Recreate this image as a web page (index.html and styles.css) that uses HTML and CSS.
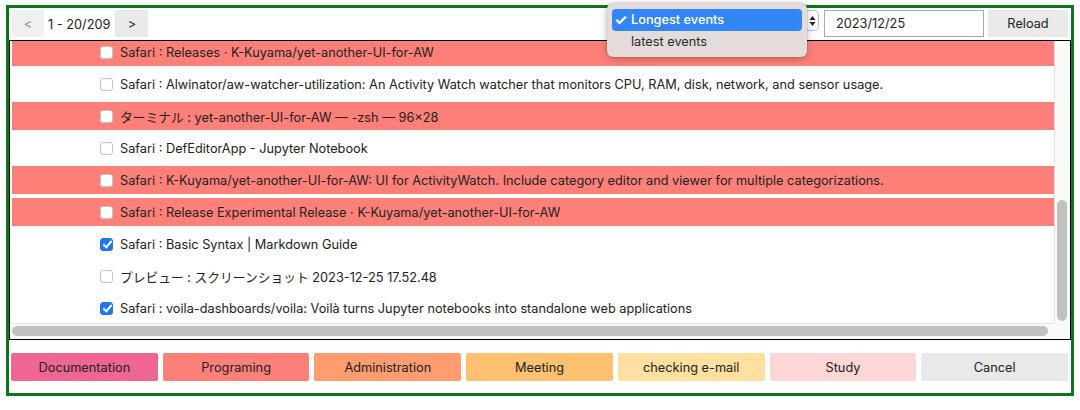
FILE: index.html
```html
<!DOCTYPE html>
<html lang="en">
<head>
<meta charset="utf-8">
<title>Events</title>
<link rel="stylesheet" href="styles.css">
</head>
<body>
<div class="frame">
  <div class="toolbar">
    <div class="pager">
      <button class="btn nav" disabled>&lt;</button>
      <span class="range">1 - 20/209</span>
      <button class="btn nav next">&gt;</button>
    </div>
    <div class="controls">
      <div class="select-wrap">
        <div class="stepper">
          <svg width="7" height="12" viewBox="0 0 7 12"><path d="M3.5 1 L6.5 5 L0.5 5 Z M3.5 11 L6.5 7 L0.5 7 Z" fill="#222"/></svg>
        </div>
        <div class="popup">
          <div class="opt active"><span class="tick">✓</span>Longest events</div>
          <div class="opt">latest events</div>
        </div>
      </div>
      <input class="date" type="text" value="2023/12/25">
      <button class="btn reload">Reload</button>
    </div>
  </div>
  <div class="table-box">
    <div class="viewport">
      <div class="list">
        <div class="row red"><input type="checkbox"><span>Safari : Releases · K-Kuyama/yet-another-UI-for-AW</span></div>
        <div class="row"><input type="checkbox"><span>Safari : Alwinator/aw-watcher-utilization: An Activity Watch watcher that monitors CPU, RAM, disk, network, and sensor usage.</span></div>
        <div class="row red"><input type="checkbox"><span>ターミナル : yet-another-UI-for-AW — -zsh — 96×28</span></div>
        <div class="row"><input type="checkbox"><span>Safari : DefEditorApp - Jupyter Notebook</span></div>
        <div class="row red"><input type="checkbox"><span>Safari : K-Kuyama/yet-another-UI-for-AW: UI for ActivityWatch. Include category editor and viewer for multiple categorizations.</span></div>
        <div class="row red"><input type="checkbox"><span>Safari : Release Experimental Release · K-Kuyama/yet-another-UI-for-AW</span></div>
        <div class="row"><input type="checkbox" checked><span>Safari : Basic Syntax | Markdown Guide</span></div>
        <div class="row"><input type="checkbox"><span>プレビュー : スクリーンショット 2023-12-25 17.52.48</span></div>
        <div class="row"><input type="checkbox" checked><span>Safari : voila-dashboards/voila: Voilà turns Jupyter notebooks into standalone web applications</span></div>
      </div>
    </div>
    <div class="vbar"><div class="vthumb"></div></div>
    <div class="hbar"><div class="hthumb"></div></div>
    <div class="corner"></div>
  </div>
  <div class="categories">
    <button class="cat c-doc">Documentation</button>
    <button class="cat c-prog">Programing</button>
    <button class="cat c-admin">Administration</button>
    <button class="cat c-meet">Meeting</button>
    <button class="cat c-mail">checking e-mail</button>
    <button class="cat c-study">Study</button>
    <button class="cat c-cancel">Cancel</button>
  </div>
</div>
</body>
</html>
```

FILE: styles.css
```css
* { box-sizing: border-box; }
html, body { margin: 0; padding: 0; background: #fff; }
body {
  font-family: Inter, "Noto Sans CJK JP", sans-serif;
  font-size: 12.75px;
  color: #222;
}
.frame {
  margin: 5px 0 0 6px;
  width: 1068px;
  height: 391px;
  border: 3px solid #0b761c;
  display: flex;
  flex-direction: column;
}
.toolbar {
  height: 32px;
  display: flex;
  justify-content: space-between;
  align-items: flex-start;
  padding: 2px 3px 0 3px;
}
.pager { display: flex; align-items: center; height: 27px; }
.btn {
  font-family: inherit;
  font-size: 12.75px;
  color: #222;
  border: none;
  border-radius: 2px;
  background: #e9e9e9;
  height: 27px;
  padding: 0;
  cursor: pointer;
}
.nav { width: 32px; }
.nav[disabled] { background: #f0f0f0; color: #888; }
.next { width: 33px; }
.range { margin: 1px 5px 0 4px; }
.controls { display: flex; align-items: flex-start; }
.select-wrap {
  position: relative;
  width: 212px;
  height: 27px;
  display: flex;
  justify-content: flex-end;
  margin-right: 5px;
}
.stepper {
  width: 13px;
  height: 21px;
  border: 1px solid #9fc2ee;
  border-left: none;
  border-radius: 0 5px 5px 0;
  display: flex;
  align-items: center;
  justify-content: center;
  background: #fff;
}
.popup {
  position: absolute;
  left: 0;
  top: -7px;
  width: 200px;
  height: 54px;
  background: #e4dbdb;
  border-radius: 6px;
  box-shadow: 0 2px 8px rgba(0,0,0,0.25), 0 0 0 0.5px rgba(0,0,0,0.15);
  padding: 6px 5px;
  z-index: 5;
}
.opt {
  height: 22px;
  line-height: 22px;
  padding-left: 19px;
  position: relative;
  color: #2a2a2a;
}
.opt.active {
  background: #3285f4;
  color: #fff;
  border-radius: 4px;
  font-weight: 500;
}
.tick {
  position: absolute;
  left: 2px;
  top: 0;
  font-size: 15px;
  font-weight: 700;
}
.date {
  width: 160px;
  height: 27px;
  border: 1px solid #a9a9a9;
  padding: 0 11px;
  font-family: inherit;
  font-size: 12.75px;
  color: #222;
  margin-right: 4px;
}
.reload { width: 80px; }
.table-box {
  height: 300px;
  border: 1px solid #000;
  display: grid;
  grid-template-columns: 1fr 16px;
  grid-template-rows: 1fr 16px;
}
.viewport {
  overflow: hidden;
  display: flex;
  flex-direction: column;
  justify-content: flex-end;
  padding: 0 0 1px 2px;
}
.list {
  display: flex;
  flex-direction: column;
  gap: 4px;
  flex: none;
  width: 1050px;
}
.row {
  height: 28px;
  display: flex;
  align-items: center;
  padding-left: 88px;
  white-space: nowrap;
}
.row.red { background: #ff8078; }
.row input {
  appearance: none;
  -webkit-appearance: none;
  width: 13px;
  height: 13px;
  margin: 0 7px 0 0;
  border: 1px solid #c4c4c4;
  border-radius: 3px;
  background: #fff;
  position: relative;
  flex: none;
}
.row input:checked {
  background: #1f77f3;
  border-color: #1f77f3;
}
.row input:checked::after {
  content: "";
  position: absolute;
  left: 3.5px;
  top: 0.5px;
  width: 3px;
  height: 7px;
  border: solid #fff;
  border-width: 0 2px 2px 0;
  transform: rotate(40deg);
}
.vbar {
  background: #fafafa;
  border-left: 1px solid #e4e4e4;
  display: flex;
  flex-direction: column;
  justify-content: flex-end;
  padding: 0 3px 2px 2px;
}
.vthumb {
  height: 121px;
  background: #c1c1c1;
  border-radius: 5px;
}
.hbar {
  background: #fafafa;
  border-top: 1px solid #e4e4e4;
  display: flex;
  align-items: center;
  padding: 0 6px 1px 2px;
}
.hthumb {
  flex: 1;
  height: 10px;
  background: #c1c1c1;
  border-radius: 5px;
}
.corner { background: #fafafa; }
.categories {
  display: flex;
  gap: 5px;
  margin: 13px 3px 0 2px;
}
.cat {
  flex: 1;
  height: 28px;
  border: none;
  border-radius: 2px;
  font-family: inherit;
  font-size: 12.75px;
  color: #222;
  padding: 0;
}
.c-doc { background: #ef6593; }
.c-prog { background: #ff8078; }
.c-admin { background: #ff9c70; }
.c-meet { background: #ffc170; }
.c-mail { background: #ffe0a0; }
.c-study { background: #ffd6d6; }
.c-cancel { background: #e9e9e9; }
```
